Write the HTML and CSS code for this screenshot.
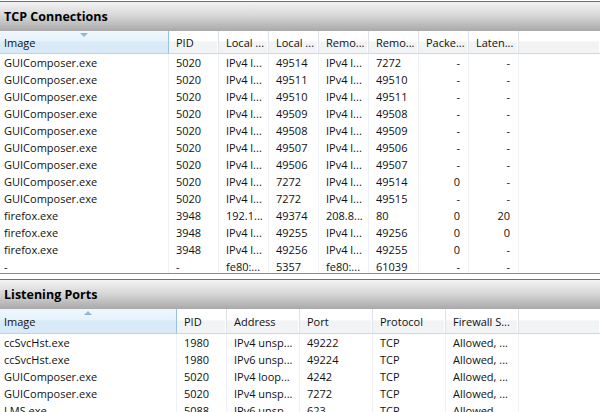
FILE: index.html
```html
<!DOCTYPE html>
<html>
    <head>
        <link rel="stylesheet" href="styles.css">
    </head>
    <body>
        <section class="pane tcp">
            <h2 class="pane-title">TCP Connections</h2>
            <div class="grid-wrap">
                <table class="grid">
                    <colgroup>
                        <col style="width:169px"><col style="width:50px"><col style="width:50px"><col style="width:50px">
                        <col style="width:50px"><col style="width:50px"><col style="width:50px"><col style="width:50px"><col>
                    </colgroup>
                    <thead>
                        <tr>
                            <th class="sorted down">Image</th>
                            <th>PID</th>
                            <th>Local ...</th>
                            <th>Local ...</th>
                            <th>Remo...</th>
                            <th>Remo...</th>
                            <th>Packe...</th>
                            <th>Laten...</th>
                            <th class="filler"></th>
                        </tr>
                    </thead>
                    <tbody>
                        <tr><td>GUIComposer.exe</td><td>5020</td><td>IPv4 l...</td><td>49514</td><td>IPv4 l...</td><td>7272</td><td class="num">-</td><td class="num">-</td><td></td></tr>
                        <tr><td>GUIComposer.exe</td><td>5020</td><td>IPv4 l...</td><td>49511</td><td>IPv4 l...</td><td>49510</td><td class="num">-</td><td class="num">-</td><td></td></tr>
                        <tr><td>GUIComposer.exe</td><td>5020</td><td>IPv4 l...</td><td>49510</td><td>IPv4 l...</td><td>49511</td><td class="num">-</td><td class="num">-</td><td></td></tr>
                        <tr><td>GUIComposer.exe</td><td>5020</td><td>IPv4 l...</td><td>49509</td><td>IPv4 l...</td><td>49508</td><td class="num">-</td><td class="num">-</td><td></td></tr>
                        <tr><td>GUIComposer.exe</td><td>5020</td><td>IPv4 l...</td><td>49508</td><td>IPv4 l...</td><td>49509</td><td class="num">-</td><td class="num">-</td><td></td></tr>
                        <tr><td>GUIComposer.exe</td><td>5020</td><td>IPv4 l...</td><td>49507</td><td>IPv4 l...</td><td>49506</td><td class="num">-</td><td class="num">-</td><td></td></tr>
                        <tr><td>GUIComposer.exe</td><td>5020</td><td>IPv4 l...</td><td>49506</td><td>IPv4 l...</td><td>49507</td><td class="num">-</td><td class="num">-</td><td></td></tr>
                        <tr><td>GUIComposer.exe</td><td>5020</td><td>IPv4 l...</td><td>7272</td><td>IPv4 l...</td><td>49514</td><td class="num">0</td><td class="num">-</td><td></td></tr>
                        <tr><td>GUIComposer.exe</td><td>5020</td><td>IPv4 l...</td><td>7272</td><td>IPv4 l...</td><td>49515</td><td class="num">-</td><td class="num">-</td><td></td></tr>
                        <tr><td>firefox.exe</td><td>3948</td><td>192.1...</td><td>49374</td><td>208.8...</td><td>80</td><td class="num">0</td><td class="num">20</td><td></td></tr>
                        <tr><td>firefox.exe</td><td>3948</td><td>IPv4 l...</td><td>49255</td><td>IPv4 l...</td><td>49256</td><td class="num">0</td><td class="num">0</td><td></td></tr>
                        <tr><td>firefox.exe</td><td>3948</td><td>IPv4 l...</td><td>49256</td><td>IPv4 l...</td><td>49255</td><td class="num">0</td><td class="num">-</td><td></td></tr>
                        <tr><td>-</td><td>-</td><td>fe80:...</td><td>5357</td><td>fe80:...</td><td>61039</td><td class="num">-</td><td class="num">-</td><td></td></tr>
                    </tbody>
                </table>
            </div>
        </section>

        <section class="pane ports">
            <h2 class="pane-title">Listening Ports</h2>
            <div class="grid-wrap">
                <table class="grid">
                    <colgroup>
                        <col style="width:177px"><col style="width:50px"><col style="width:73px"><col style="width:73px">
                        <col style="width:73px"><col style="width:73px"><col>
                    </colgroup>
                    <thead>
                        <tr>
                            <th class="sorted up">Image</th>
                            <th>PID</th>
                            <th>Address</th>
                            <th>Port</th>
                            <th>Protocol</th>
                            <th>Firewall S...</th>
                            <th class="filler"></th>
                        </tr>
                    </thead>
                    <tbody>
                        <tr><td>ccSvcHst.exe</td><td>1980</td><td>IPv4 unsp...</td><td>49222</td><td>TCP</td><td>Allowed, ...</td><td></td></tr>
                        <tr><td>ccSvcHst.exe</td><td>1980</td><td>IPv6 unsp...</td><td>49224</td><td>TCP</td><td>Allowed, ...</td><td></td></tr>
                        <tr><td>GUIComposer.exe</td><td>5020</td><td>IPv4 loop...</td><td>4242</td><td>TCP</td><td>Allowed, ...</td><td></td></tr>
                        <tr><td>GUIComposer.exe</td><td>5020</td><td>IPv4 unsp...</td><td>7272</td><td>TCP</td><td>Allowed, ...</td><td></td></tr>
                        <tr><td>LMS.exe</td><td>5088</td><td>IPv6 unsp...</td><td>623</td><td>TCP</td><td>Allowed, ...</td><td></td></tr>
                    </tbody>
                </table>
            </div>
        </section>
    </body>
</html>
```

FILE: styles.css
```css
body{
    margin: 0;
    padding-top: 1px;
    background: white;
    font-family: "Open Sans", "Noto Sans", sans-serif;
    font-size: 11px;
    color: #111;
    overflow: hidden;
}
.pane{
    border-top: 1px solid #6f6f6f;
}
.pane-title{
    margin: 0;
    height: 29px;
    line-height: 29px;
    padding-left: 4px;
    font-size: 12.5px;
    font-weight: bold;
    color: #000;
    background: linear-gradient(#f3f3f3, #d8d8d8 45%, #a9a9a9);
}
.tcp .grid-wrap{
    height: 242px;
    overflow: hidden;
    border-bottom: 1px solid #8a8a8a;
    margin-bottom: 5px;
}
.grid{
    width: 100%;
    table-layout: fixed;
    border-spacing: 0;
}
.grid th{
    position: relative;
    height: 22px;
    padding: 0 0 0 7px;
    text-align: left;
    font-weight: normal;
    white-space: nowrap;
    overflow: hidden;
    background: linear-gradient(#ffffff, #ffffff 45%, #f2f3f5 50%, #f2f3f5);
    border-right: 1px solid #dfe2e7;
    border-bottom: 1px solid #d5d5d5;
    box-shadow: inset -1px 0 0 #fff;
}
.ports .grid th{
    height: 24px;
}
.grid th:first-child{
    padding-left: 4px;
}
.grid th.filler{
    border-right: 0;
}
.grid th.sorted{
    background: linear-gradient(#eef7fd, #e6f2fb 45%, #d8eaf7 50%, #d8eaf7);
    border-right: 1px solid #96c4e6;
    border-bottom: 1px solid #b6d6ee;
    box-shadow: none;
}
/* sort arrow on the active column */
.grid th.sorted::before{
    content: "";
    position: absolute;
    top: 2px;
    left: 50%;
    margin-left: -4px;
    border-left: 4px solid transparent;
    border-right: 4px solid transparent;
}
.grid th.down::before{
    border-top: 4px solid #8fb7d6;
}
.grid th.up::before{
    border-bottom: 4px solid #8fb7d6;
}
.grid td{
    height: 17px;
    padding: 0 0 0 7px;
    white-space: nowrap;
    overflow: hidden;
    border-right: 1px solid #eef2f8;
}
.grid td:first-child{
    padding-left: 4px;
}
.grid td:last-child{
    border-right: 0;
}
.grid td.num{
    text-align: right;
    padding: 0 8px 0 0;
}
```
